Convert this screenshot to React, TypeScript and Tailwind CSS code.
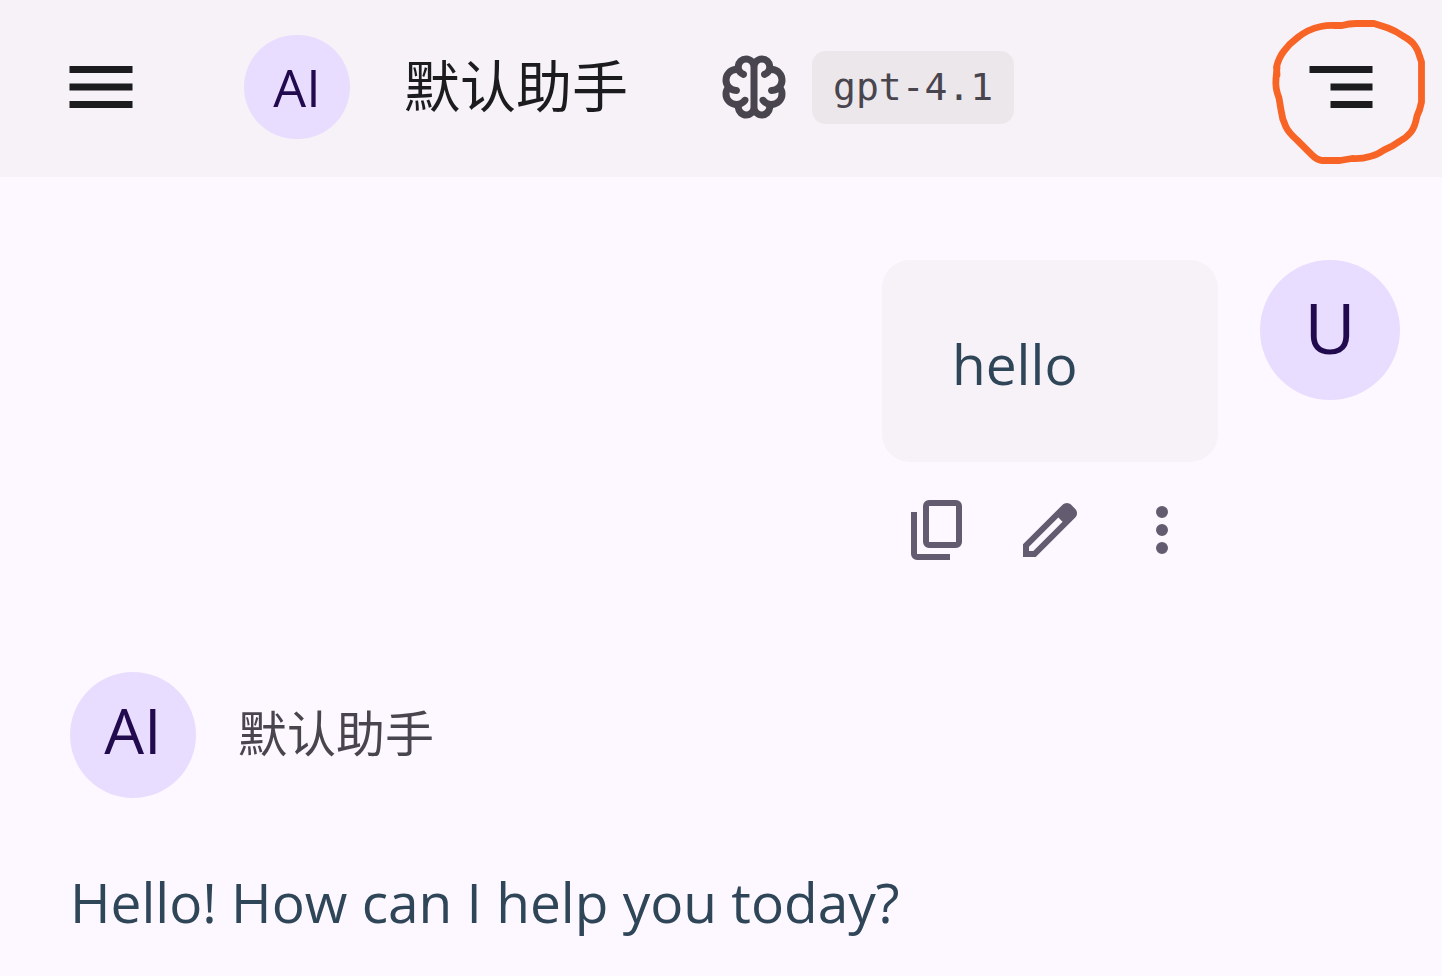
import type { ReactNode } from "react";

const SANS = "font-['Open_Sans','Noto_Sans_CJK_SC',sans-serif]";

function MenuIcon() {
  return (
    <svg viewBox="0 0 24 24" className="size-[84px]" fill="currentColor" aria-hidden="true">
      <path d="M3 18h18v-2H3v2zm0-5h18v-2H3v2zm0-7v2h18V6H3z" />
    </svg>
  );
}

function OutlineMenuIcon() {
  return (
    <svg viewBox="0 0 24 24" className="size-[84px]" fill="currentColor" aria-hidden="true">
      <path d="M9 18h12v-2H9v2zm0-5h12v-2H9v2zM3 6v2h18V6H3z" />
    </svg>
  );
}

const BRAIN_HALF =
  "M478-801L480-803q18-17 41-27t49-10q52 0 89.500 35t40.500 86q59 8 99.500 53T840-560q0 22-5.500 42T818-480q11 18 16.500 38.500T840-400q0 62-40.500 106.500T699-241q-5 50-41.500 85.500T570-120q-25 0-48.500-9.500T480-156L478-158ZM520-710v460q0 21 14.500 35.500T570-200q20 0 34.500-16t15.500-36q-21-8-38.500-21.500T550-306q-10-14-7.500-30t16.500-26q14-10 30-7.500t26 16.500q11 16 28 24.500t37 8.500q33 0 56.500-23.500T760-400q0-5-.5-10t-2.500-10q-17 10-36.500 15t-40.500 5q-17 0-28.500-11.500T640-440q0-17 11.500-28.500T680-480q33 0 56.500-23.500T760-560q0-33-23.500-56T680-640q-11 18-28.500 31.500T613-587q-16 6-31-1t-20-23q-5-16 1.500-31t22.500-20q15-5 24.500-18t9.500-30q0-21-14.500-35.500T570-760q-21 0-35.500 14.500T520-710Z";

function BrainIcon() {
  return (
    <svg viewBox="0 -960 960 960" className="size-[84px] shrink-0 text-[#49454e]" fill="currentColor" fillRule="evenodd" aria-hidden="true">
      <path d={BRAIN_HALF} />
      <path d={BRAIN_HALF} transform="translate(960 0) scale(-1 1)" />
    </svg>
  );
}

function ActionButton({ label, d }: { label: string; d: string }) {
  return (
    <button type="button" aria-label={label} className="flex size-28 items-center justify-center text-[#635b70]">
      <svg viewBox="0 -960 960 960" className="size-[72px]" fill="currentColor" aria-hidden="true">
        <path d={d} />
      </svg>
    </button>
  );
}

function Avatar({ className, children }: { className: string; children: ReactNode }) {
  return (
    <div className={`flex shrink-0 justify-center rounded-full bg-[#e8ddff] text-[#220a4f] ${className}`}>
      {children}
    </div>
  );
}

const COPY =
  "M360-240q-33 0-56.500-23.500T280-320v-480q0-33 23.500-56.500T360-880h360q33 0 56.500 23.500T800-800v480q0 33-23.500 56.500T720-240H360Zm0-80h360v-480H360v480ZM200-80q-33 0-56.500-23.500T120-160v-560h80v560h440v80H200Z";
const EDIT =
  "M200-200h57l391-391-57-57-391 391v57Zm-80 80v-170l528-527q12-11 26.500-17t30.500-6q16 0 31 6t26 18l55 56q12 11 17.500 26t5.500 30q0 16-5.500 30.500T817-647L290-120H120Z";
const MORE =
  "M480-160q-33 0-56.500-23.500T400-240q0-33 23.500-56.500T480-320q33 0 56.500 23.500T560-240q0 33-23.500 56.500T480-160Zm0-240q-33 0-56.500-23.500T400-480q0-33 23.500-56.500T480-560q33 0 56.500 23.500T560-480q0 33-23.500 56.500T480-400Zm0-240q-33 0-56.500-23.500T400-720q0-33 23.500-56.500T480-800q33 0 56.500 23.500T560-720q0 33-23.500 56.500T480-640Z";

export default function App() {
  return (
    <div className={`min-h-screen bg-[#fdf8ff] ${SANS}`}>
      <header className="relative flex h-[177px] items-center bg-[#f6f2f8] pr-[59px] pb-[3px] pl-[59px] text-[#1c1b1e]">
        <button type="button" aria-label="菜单" className="shrink-0">
          <MenuIcon />
        </button>
        <Avatar className="ml-[101px] h-[104px] w-[106px] items-center text-[52px] leading-[104px]">AI</Avatar>
        <h1 className="ml-[54px] pb-1 text-[56px] leading-[84px] whitespace-nowrap">默认助手</h1>
        <div className="ml-[84px] flex items-center gap-4">
          <BrainIcon />
          <code className="rounded-[14px] bg-[#ebe7eb] px-[21px] font-['DejaVu_Sans_Mono',monospace] text-[38px] leading-[73px] whitespace-nowrap text-[#49454e]">
            gpt-4.1
          </code>
        </div>
        <button type="button" aria-label="话题" className="ml-auto shrink-0">
          <OutlineMenuIcon />
        </button>
        <svg
          viewBox="1250 0 192 177"
          className="pointer-events-none absolute top-0 right-0 h-[177px] w-48"
          fill="none"
          stroke="#f76425"
          strokeWidth="6.800"
          strokeLinecap="round"
          strokeLinejoin="round"
          aria-hidden="true"
        >
          <path d="M1277 75L1276.500 67Q1279 57 1284 51Q1289 44 1297 38Q1308 29 1321 26.500Q1328 25 1335 25.500L1342 25.500Q1349 23.500 1356 23.500L1374 23.500Q1382 26 1388 28Q1396 31 1403 36Q1412 41 1415 46Q1418 50 1419.500 56L1421.500 62L1421.500 102Q1420 110 1417 116Q1415 127 1411 132Q1406 138 1400 141Q1392 147 1384 150Q1377 155 1370 156.500Q1362 159 1352 158.500L1340 160.500L1322 160.500Q1317 160 1312 155L1297 140Q1289 133 1286 127Q1282 119 1281 110L1279 98Q1275 88 1276 79L1277 67" />
        </svg>
      </header>

      <main>
        <section className="flex items-start justify-end gap-[42px] pt-[83px] pr-[42px]">
          <div className="flex flex-col">
            <div className="rounded-[28px] bg-[#f6f2f8] px-[70px] pt-[61px] pb-14 text-[55px] leading-[85px] text-[#2f4558]">
              hello
            </div>
            <div className="mt-3 flex">
              <ActionButton label="复制" d={COPY} />
              <ActionButton label="编辑" d={EDIT} />
              <ActionButton label="更多" d={MORE} />
            </div>
          </div>
          <Avatar className="size-[140px] text-[70px] leading-[134px]">U</Avatar>
        </section>

        <section className="px-[70px] pt-[86px]">
          <div className="flex items-center gap-[42px]">
            <Avatar className="size-[126px] text-[63px] leading-[116px]">AI</Avatar>
            <h2 className="pb-1 text-[49px] leading-[72px] text-[#49454e]">默认助手</h2>
          </div>
          <p className="pt-[62px] text-[55px] leading-[84px] text-[#2f4558]">Hello! How can I help you today?</p>
        </section>
      </main>
    </div>
  );
}
